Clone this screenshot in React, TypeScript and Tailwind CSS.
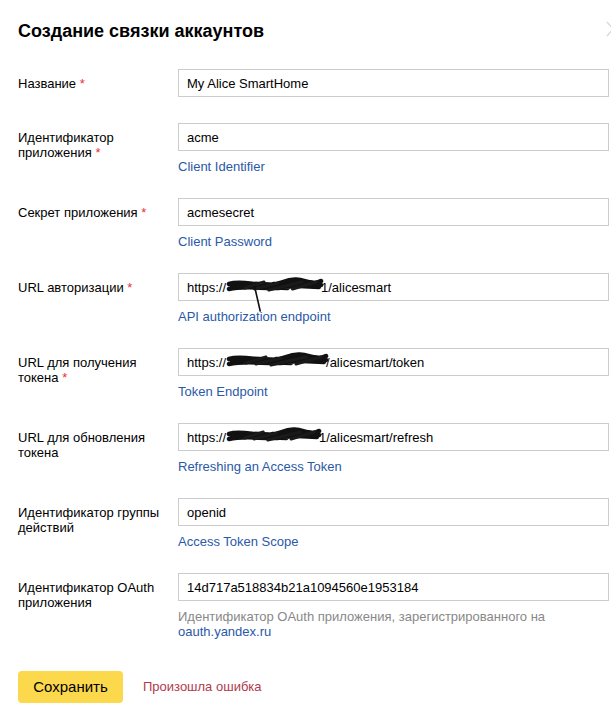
import React from "react";

type Field = {
  label: string;
  required?: boolean;
  value: React.ReactNode;
  hint?: React.ReactNode;
};

function Scribble({ width, tail }: { width: number; tail?: boolean }) {
  const w = width;
  return (
    <span className="relative inline-block h-[14px] align-middle" style={{ width: w }}>
      <svg
        className="absolute left-0 top-[-4px] overflow-visible"
        width={w}
        height={22}
        viewBox={`0 0 ${w} 22`}
        fill="none"
      >
        <path
          d={`M3 8 C ${w * 0.2} 3, ${w * 0.4} 14, ${w * 0.6} 6 S ${w * 0.88} 12, ${w} 5 M3 13 C ${w * 0.25} 8, ${w * 0.5} 16, ${w * 0.75} 9 S ${w - 6} 12, ${w} 9 M6 11 L ${w * 0.75} 10 M${w * 0.12} 7 L ${w - 2} 11 M${w * 0.08} 10 L ${w * 0.65} 12 M${w * 0.5} 8 L ${w - 1} 7`}
          stroke="#111"
          strokeWidth={4.5}
          strokeLinecap="round"
        />
        <path
          d={`M${w * 0.3} 13 L ${w * 0.55} 7 M${w * 0.45} 14 L ${w * 0.8} 6 M${w * 0.2} 12 L ${w * 0.4} 6 M${w * 0.7} 13 L ${w * 0.95} 6`}
          stroke="#1a1a1a"
          strokeWidth={3}
          strokeLinecap="round"
        />
        {tail && (
          <path d={`M${w * 0.3} 10 L ${w * 0.36} 35`} stroke="#111" strokeWidth={1.6} strokeLinecap="round" />
        )}
      </svg>
    </span>
  );
}

const link = "text-[#2a59a8]";

const fields: Field[] = [
  { label: "Название", required: true, value: "My Alice SmartHome" },
  { label: "Идентификатор приложения", required: true, value: "acme", hint: <span className={link}>Client Identifier</span> },
  { label: "Секрет приложения", required: true, value: "acmesecret", hint: <span className={link}>Client Password</span> },
  {
    label: "URL авторизации",
    required: true,
    value: (
      <>
        https://
        <Scribble width={95} tail />
        1/alicesmart
      </>
    ),
    hint: <span className={link}>API authorization endpoint</span>,
  },
  {
    label: "URL для получения токена",
    required: true,
    value: (
      <>
        https://
        <Scribble width={100} />
        /alicesmart/token
      </>
    ),
    hint: <span className={link}>Token Endpoint</span>,
  },
  {
    label: "URL для обновления токена",
    value: (
      <>
        https://
        <Scribble width={93} />
        1/alicesmart/refresh
      </>
    ),
    hint: <span className={link}>Refreshing an Access Token</span>,
  },
  { label: "Идентификатор группы действий", value: "openid", hint: <span className={link}>Access Token Scope</span> },
  {
    label: "Идентификатор OAuth приложения",
    value: "14d717a518834b21a1094560e1953184",
    hint: (
      <span className="text-[#888]">
        Идентификатор OAuth приложения, зарегистрированного на
        <br />
        <span className={link}>oauth.yandex.ru</span>
      </span>
    ),
  },
];

export default function App() {
  return (
    <div className="relative min-h-[717px] overflow-hidden bg-white pl-[18px] pt-[19px] font-['Liberation_Sans',Arial,sans-serif] text-[13px] text-black">
      <svg className="absolute right-[-4px] top-[21px]" width="10" height="16" viewBox="0 0 10 16" fill="none">
        <path d="M2 1 L8 8 L2 15" stroke="#d6d6d6" strokeWidth="1.2" />
      </svg>
      <h1 className="text-[18px] font-bold leading-[24px]">Создание связки аккаунтов</h1>
      <div className="mt-[26px] flex flex-col">
        {fields.map((f, i) => (
          <div key={i} className={`flex ${f.hint ? "mb-[24px]" : "mb-[26px]"} last:mb-0`}>
            <div className="w-[160px] shrink-0 pr-[10px] pt-[7px] leading-[15px]">
              {f.label}
              {f.required && <span className="text-[#e8303a]"> *</span>}
            </div>
            <div className="flex-1 pr-[2px]">
              <div className="flex h-[28px] items-center whitespace-nowrap border border-[#cccccc] px-[8px] leading-[15px]">
                {f.value}
              </div>
              {f.hint && <div className="mt-[8px] leading-[15px]">{f.hint}</div>}
            </div>
          </div>
        ))}
      </div>
      <div className="mt-[32px] flex items-center gap-[20px]">
        <button className="h-[32px] w-[105px] rounded-[4px] bg-[#fcd84c] text-[15px] text-black">Сохранить</button>
        <span className="text-[#b23a4c]">Произошла ошибка</span>
      </div>
    </div>
  );
}
